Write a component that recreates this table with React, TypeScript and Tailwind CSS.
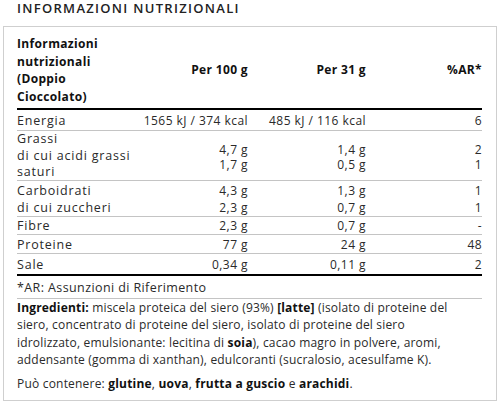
import React from "react";

const font = { fontFamily: '"Open Sans", "Noto Sans", sans-serif' };

function Row({
  label,
  a,
  b,
  c,
  last,
  cls = "",
}: {
  label: React.ReactNode;
  a: React.ReactNode;
  b: React.ReactNode;
  c: React.ReactNode;
  last?: boolean;
  cls?: string;
}) {
  return (
    <div
      className={`grid grid-cols-[125px_106px_118px_116px] items-center ${
        last ? "border-b-[2px] border-black" : "border-b-[1.5px] border-[#c4c4c4]"
      } ${cls}`}
    >
      <div className="text-left whitespace-nowrap text-[12.5px] tracking-[0.8px]">{label}</div>
      <div className="text-right whitespace-nowrap">{a}</div>
      <div className="text-right whitespace-nowrap">{b}</div>
      <div className="text-right whitespace-nowrap">{c}</div>
    </div>
  );
}

export default function App() {
  return (
    <div
      className="w-[500px] h-[405px] bg-white text-[#2a2a2a] overflow-hidden"
      style={font}
    >
      <div className="pl-[17px] pt-[0px] h-[26px] text-[13px] font-semibold tracking-[1.3px] text-[#222] leading-[17px] whitespace-nowrap">
        INFORMAZIONI NUTRIZIONALI
      </div>
      <div className="ml-[3px] w-[494px] h-[375px] border border-[#cfcfcf] px-[13px] pt-[8px] text-[12px] tracking-[0.45px] leading-[17px]">
        <div className="w-[465px]">
          <div className="grid grid-cols-[125px_106px_118px_116px] items-center border-b-[2px] border-black pb-[3px] font-bold text-[#111] text-[12px] tracking-[0.35px] leading-[17.5px]">
            <div>
              Informazioni
              <br />
              nutrizionali
              <br />
              (Doppio
              <br />
              Cioccolato)
            </div>
            <div className="text-right">Per 100 g</div>
            <div className="text-right">Per 31 g</div>
            <div className="text-right">%AR*</div>
          </div>
          <Row cls="h-[21px]" label="Energia" a="1565 kJ / 374 kcal" b="485 kJ / 116 kcal" c="6" />
          <Row
            cls="h-[50px] leading-[16.5px]"
            label={
              <>
                Grassi
                <br />
                di cui acidi grassi
                <br />
                saturi
              </>
            }
            a={
              <div className="pt-[3px] leading-[15.5px]">
                4,7 g
                <br />
                1,7 g
              </div>
            }
            b={
              <div className="pt-[3px] leading-[15.5px]">
                1,4 g
                <br />
                0,5 g
              </div>
            }
            c={
              <div className="pt-[3px] leading-[15.5px]">
                2
                <br />
                1
              </div>
            }
          />
          <Row
            cls="h-[36px]"
            label={
              <>
                Carboidrati
                <br />
                di cui zuccheri
              </>
            }
            a={
              <>
                4,3 g
                <br />
                2,3 g
              </>
            }
            b={
              <>
                1,3 g
                <br />
                0,7 g
              </>
            }
            c={
              <>
                1
                <br />1
              </>
            }
          />
          <Row cls="h-[18px]" label="Fibre" a="2,3 g" b="0,7 g" c="-" />
          <Row cls="h-[19px]" label="Proteine" a="77 g" b="24 g" c="48" />
          <Row cls="h-[22px]" last label="Sale" a="0,34 g" b="0,11 g" c="2" />
          <div className="h-[23px] flex items-center border-b-[1.5px] border-[#c4c4c4] text-[12.5px] tracking-[0.4px] whitespace-nowrap">
            *AR: Assunzioni di Riferimento
          </div>
          <p className="pt-[0px] leading-[17.3px] whitespace-nowrap tracking-[0.18px]">
            <b className="text-[#111]">Ingredienti:</b> miscela proteica del siero (93%){" "}
            <b className="text-[#111]">[latte]</b> (isolato di proteine del
            <br />
            siero, concentrato di proteine del siero, isolato di proteine del siero
            <br />
            idrolizzato, emulsionante: lecitina di <b className="text-[#111]">soia</b>), cacao
            magro in polvere, aromi,
            <br />
            addensante (gomma di xanthan), edulcoranti (sucralosio, acesulfame K).
          </p>
          <p className="mt-[7px] leading-[17px] whitespace-nowrap tracking-[0.2px]">
            Può contenere: <b className="text-[#111]">glutine</b>,{" "}
            <b className="text-[#111]">uova</b>, <b className="text-[#111]">frutta a guscio</b> e{" "}
            <b className="text-[#111]">arachidi</b>.
          </p>
        </div>
      </div>
    </div>
  );
}
